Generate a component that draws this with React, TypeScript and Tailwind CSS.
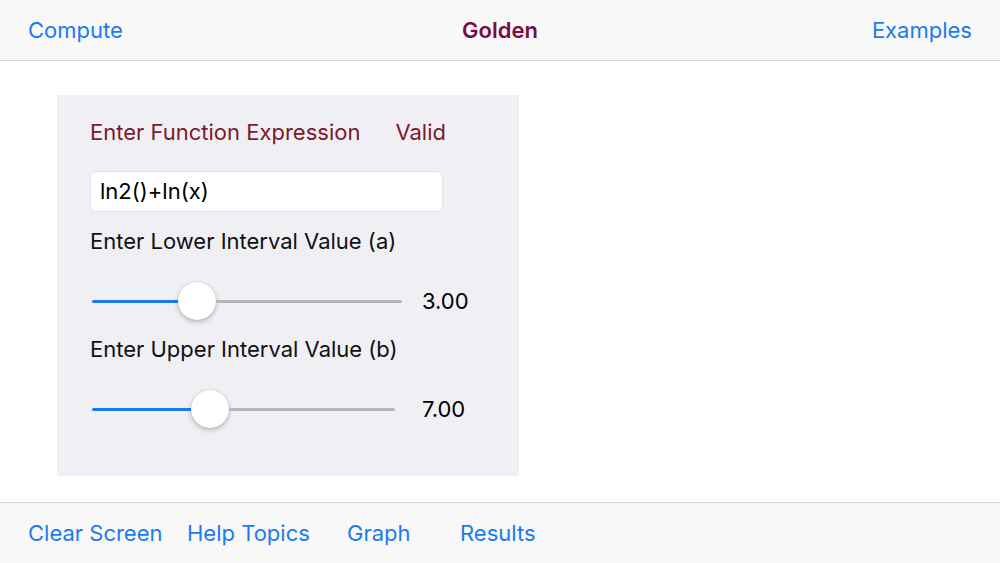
import React from 'react'

const font = { fontFamily: 'Inter, "Liberation Sans", sans-serif' }

function Slider({ width, pos, value }: { width: number; pos: number; value: string }) {
  // pos = thumb centre offset from track start
  return (
    <div className="flex items-center mt-[12px] h-[62px]">
      <div className="w-[332px] flex items-center">
        <div className="flex items-center ml-[2px]" style={{ width }}>
          <div className="h-[3px] bg-[#1a7bf0] rounded-l-full" style={{ width: pos - 19 }} />
          <div className="w-[38px] h-[38px] rounded-full bg-white shadow-[0_2px_5px_rgba(0,0,0,0.25),0_0_1px_rgba(0,0,0,0.2)] shrink-0" />
          <div className="h-[3px] bg-[#b6b6ba] flex-1 rounded-r-full" />
        </div>
      </div>
      <span className="text-[22px] text-black">{value}</span>
    </div>
  )
}

export default function App() {
  return (
    <div className="w-[1000px] h-[563px] flex flex-col bg-white overflow-hidden" style={font}>
      {/* Top bar */}
      <div className="h-[61px] shrink-0 bg-[#f8f8f8] border-b border-[#d6d6d8] flex items-center justify-between px-[28px] relative">
        <button className="text-[22px] text-[#1a7bf0]">Compute</button>
        <span className="absolute left-1/2 -translate-x-1/2 text-[22px] font-semibold text-[#7b0c3d]">Golden</span>
        <button className="text-[22px] text-[#1a7bf0]">Examples</button>
      </div>

      {/* Content */}
      <div className="flex-1 pt-[34px] pl-[57px]">
        <div className="w-[462px] h-[381px] bg-[#efeff4] pl-[33px] pt-[20px]">
          <div className="flex items-center h-[34px] text-[22px] text-[#7b1a2c]">
            <span>Enter Function Expression</span>
            <span className="ml-[35px]">Valid</span>
          </div>
          <div className="mt-[22px] w-[353px] h-[41px] bg-white rounded-[6px] border border-[#e2e2e6] flex items-center px-[9px] text-[22px] text-black">
            ln2()+ln(x)
          </div>
          <div className="mt-[12px] text-[22px] text-[#111] h-[34px] flex items-center">Enter Lower Interval Value (a)</div>
          <Slider width={310} pos={105} value="3.00" />
          <div className="text-[22px] text-[#111] h-[34px] flex items-center">Enter Upper Interval Value (b)</div>
          <Slider width={303} pos={118} value="7.00" />
        </div>
      </div>

      {/* Bottom bar */}
      <div className="h-[61px] shrink-0 bg-[#f8f8f8] border-t border-[#d6d6d8] flex items-center pl-[28px] text-[22px] text-[#1a7bf0]">
        <button className="w-[159px] text-left">Clear Screen</button>
        <button className="w-[160px] text-left">Help Topics</button>
        <button className="w-[113px] text-left">Graph</button>
        <button className="text-left">Results</button>
      </div>
    </div>
  )
}
